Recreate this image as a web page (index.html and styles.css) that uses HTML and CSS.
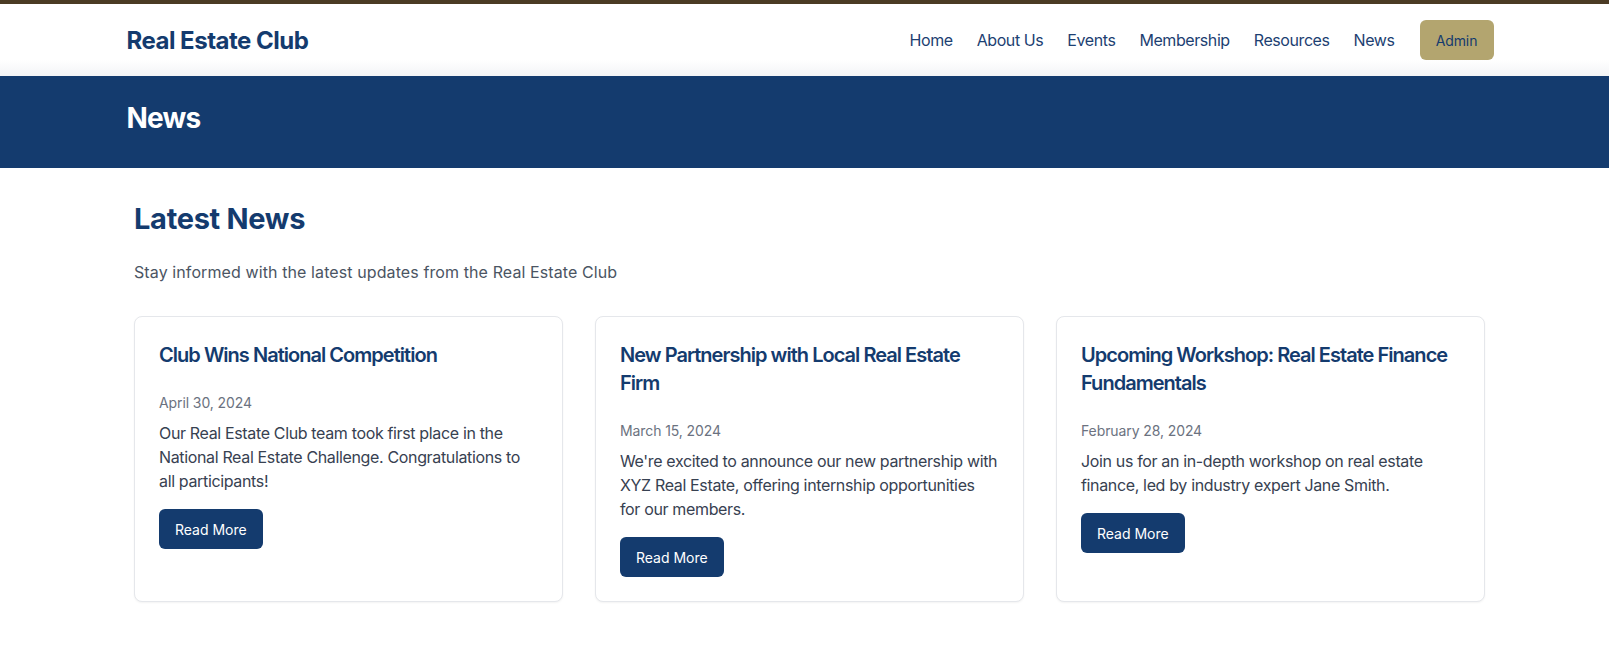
FILE: index.html
```html
<!DOCTYPE html>
<html lang="en">
<head>
<meta charset="utf-8">
<title>News - Real Estate Club</title>
<link rel="stylesheet" href="styles.css">
</head>
<body>
<div class="topbar"></div>
<header class="site-header">
  <div class="container header-inner">
    <a class="brand" href="#">Real Estate Club</a>
    <nav class="nav">
      <a href="#">Home</a>
      <a href="#">About Us</a>
      <a href="#">Events</a>
      <a href="#">Membership</a>
      <a href="#">Resources</a>
      <a href="#">News</a>
      <a href="#" class="admin-btn">Admin</a>
    </nav>
  </div>
</header>
<section class="hero">
  <div class="container">
    <h1>News</h1>
  </div>
</section>
<main class="main">
  <div class="content">
    <h2 class="section-title">Latest News</h2>
    <p class="section-sub">Stay informed with the latest updates from the Real Estate Club</p>
    <div class="cards">
      <article class="card">
        <h3>Club Wins National Competition</h3>
        <p class="date">April 30, 2024</p>
        <p class="excerpt">Our Real Estate Club team took first place in the National Real Estate Challenge. Congratulations to all participants!</p>
        <a href="#" class="btn">Read More</a>
      </article>
      <article class="card">
        <h3>New Partnership with Local Real Estate Firm</h3>
        <p class="date">March 15, 2024</p>
        <p class="excerpt">We're excited to announce our new partnership with XYZ Real Estate, offering internship opportunities for&nbsp;our members.</p>
        <a href="#" class="btn">Read More</a>
      </article>
      <article class="card">
        <h3>Upcoming Workshop: Real Estate Finance Fundamentals</h3>
        <p class="date">February 28, 2024</p>
        <p class="excerpt">Join us for an in-depth workshop on real estate finance, led by industry expert Jane Smith.</p>
        <a href="#" class="btn">Read More</a>
      </article>
    </div>
  </div>
</main>
</body>
</html>
```

FILE: styles.css
```css
* { box-sizing: border-box; }

body {
  margin: 0;
  font-family: Inter, "Noto Sans", "Liberation Sans", sans-serif;
  color: #374151;
  background: #ffffff;
}

a { text-decoration: none; }

.topbar {
  height: 4px;
  background: #4b3b24;
}

.container {
  width: 1367px;
  margin-left: calc(50% - 678px);
}

.site-header {
  height: 72px;
  background: linear-gradient(to bottom, #ffffff 0, #ffffff 56px, #f3f4f6 72px);
}

.header-inner {
  height: 72px;
  display: flex;
  align-items: center;
  justify-content: space-between;
}

.brand {
  font-size: 24px;
  font-weight: 700;
  color: #143b6e;
  letter-spacing: -0.5px;
}

.nav {
  display: flex;
  align-items: center;
  gap: 24px;
}

.nav a {
  font-size: 16px;
  color: #1d3f72;
  letter-spacing: -0.42px;
}

.nav a.admin-btn {
  display: inline-flex;
  align-items: center;
  justify-content: center;
  width: 74px;
  height: 40px;
  margin-left: 1px;
  background: #b3a56f;
  border-radius: 6px;
  font-size: 14px;
  color: #143b6e;
  letter-spacing: -0.1px;
}

.hero {
  background: #143b6e;
  padding: 24px 0 32px;
}

.hero h1 {
  margin: 0;
  font-size: 28px;
  line-height: 36px;
  font-weight: 700;
  color: #ffffff;
  letter-spacing: -0.8px;
}

.main {
  padding: 33px 0 40px;
}

.content {
  width: 1351px;
  margin-left: calc(50% - 670.5px);
}

.section-title {
  margin: 0 0 23px;
  font-size: 29px;
  line-height: 36px;
  font-weight: 700;
  color: #143b6e;
  letter-spacing: -0.3px;
}

.section-sub {
  margin: 0 0 32px;
  font-size: 16px;
  line-height: 24px;
  color: #4b5563;
  letter-spacing: 0.1px;
}

.cards {
  display: grid;
  grid-template-columns: repeat(3, 1fr);
  gap: 32px;
}

.card {
  border: 1px solid #e5e7eb;
  border-radius: 8px;
  padding: 24px;
  background: #ffffff;
  box-shadow: 0 1px 2px rgba(0, 0, 0, 0.05);
}

.card h3 {
  margin: 0 0 24px;
  font-size: 20px;
  line-height: 28px;
  font-weight: 600;
  color: #143b6e;
  letter-spacing: -0.97px;
}

.date {
  margin: 0 0 8px;
  font-size: 14px;
  line-height: 20px;
  color: #6b7280;
  letter-spacing: -0.1px;
}

.excerpt {
  margin: 0 0 16px;
  font-size: 16px;
  line-height: 24px;
  color: #374151;
  letter-spacing: -0.35px;
}

.btn {
  display: inline-flex;
  align-items: center;
  justify-content: center;
  height: 40px;
  padding: 0 16px;
  min-width: 103px;
  background: #143b6e;
  color: #ffffff;
  border-radius: 6px;
  font-size: 14px;
}
```
